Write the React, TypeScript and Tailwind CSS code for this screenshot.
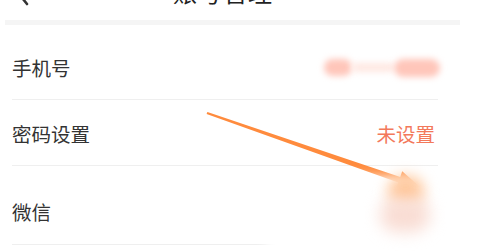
import React from "react";

const font = { fontFamily: '"Noto Sans CJK SC", "Noto Sans", sans-serif' };

export default function App() {
  return (
    <div className="relative w-[477px] h-[251px] overflow-hidden bg-white" style={font}>
      {/* header (cut off at top) */}
      <div className="h-[20px] overflow-hidden">
        <div className="-mt-[23px] h-[30px] flex items-center">
          <svg className="ml-[14px] shrink-0" width="18" height="30" viewBox="0 0 18 30">
            <path d="M12 4 L5 17 L13 27" fill="none" stroke="#333" strokeWidth="2.6" strokeLinecap="round" strokeLinejoin="round" />
          </svg>
          <span className="ml-[141px] text-[24px] leading-[30px] text-[#222] tracking-[1px]">账号管理</span>
        </div>
      </div>
      <div className="ml-[5px] w-[455px] h-[5px] bg-[#f5f5f5]" />

      {/* list */}
      <div className="ml-[12px] w-[426px] text-[19.5px] text-[#333]">
        <div className="h-[75px] pt-[11px] flex items-center justify-between border-b border-[#efefef]">
          <span>手机号</span>
          <div className="flex items-center mr-[-2px]">
            <div className="w-[28px] h-[17px] rounded-full bg-[#ffc6ba] blur-[3px]" />
            <div className="w-[42px] h-[9px] rounded-full bg-[#ffe8e2] blur-[3px]" />
            <div className="w-[46px] h-[18px] rounded-full bg-[#ffc6ba] blur-[3px]" />
          </div>
        </div>
        <div className="h-[66px] pt-[3px] flex items-center justify-between border-b border-[#efefef]">
          <span>密码设置</span>
          <span className="mr-[3px] text-[#f3795b]">未设置</span>
        </div>
        <div className="h-[79px] pt-[14px] flex items-center border-b border-[#efefef]">
          <span>微信</span>
        </div>
      </div>

      {/* arrow annotation */}
      <svg className="absolute left-0 top-0" width="477" height="251" viewBox="0 0 477 251">
        <polygon
          points="207.4,111.9 400.2,177.0 402.2,171.3 420,187 396.2,188.3 398.2,182.6 206.6,114.1"
          fill="#ff8b3d"
        />
      </svg>

      {/* blurred mosaic patch over the arrow tip */}
      <div className="absolute left-[266px] top-[177px] w-[230px] h-[85px] bg-white blur-[6px]" />
      <div className="absolute left-[388px] top-[176px] w-[36px] h-[30px] rounded-full bg-[#ffc79a] blur-[7px]" />
      <div className="absolute left-[380px] top-[198px] w-[50px] h-[34px] rounded-full bg-[#f9ddd4] blur-[8px]" />
    </div>
  );
}
